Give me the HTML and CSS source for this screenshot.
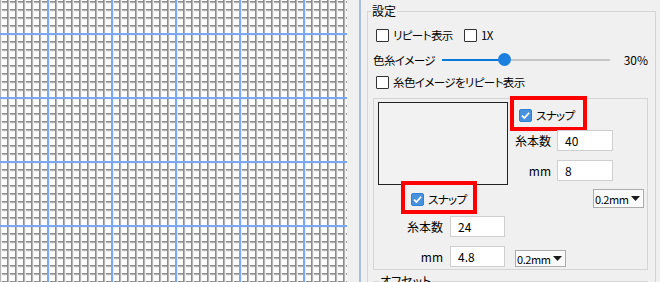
FILE: index.html
```html
<!DOCTYPE html>
<html lang="ja">
  <head>
    <meta charset="UTF-8" />
    <title>設定</title>
    <link rel="stylesheet" href="styles.css">
  </head>
  <body>
    <div class="app">
      <div class="viewer">
        <div class="canvas"></div>
      </div>

      <div class="panel">
        <fieldset class="group">
          <legend>設定</legend>

          <div class="row opts">
            <label class="check repeat"><span class="box"></span>リピート表示</label>
            <label class="check"><span class="box"></span>1X</label>
          </div>

          <div class="row slider-row">
            <span class="slider-label">色糸イメージ</span>
            <div class="slider"><span class="thumb"></span></div>
            <span class="value">30%</span>
          </div>

          <div class="row opts-2">
            <label class="check"><span class="box"></span>糸色イメージをリピート表示</label>
          </div>

          <!-- サイズ指定 -->
          <div class="size-box">
            <div class="preview"></div>

            <label class="check snap snap-x">
              <svg class="box-on" width="13" height="13" viewBox="0 0 13 13"><rect x="0.5" y="0.5" width="12" height="12" rx="1.5" fill="#4792df" stroke="#2f7fd2"/><path d="M3 6.6 L5.4 9.1 L10.1 3.7" fill="none" stroke="#fff" stroke-width="1.7"/></svg>
              スナップ
            </label>
            <div class="field count-x"><span class="field-label">糸本数</span><span class="input">40</span></div>
            <div class="field mm-x"><span class="field-label">mm</span><span class="input">8</span></div>

            <label class="check snap snap-y">
              <svg class="box-on" width="13" height="13" viewBox="0 0 13 13"><rect x="0.5" y="0.5" width="12" height="12" rx="1.5" fill="#4792df" stroke="#2f7fd2"/><path d="M3 6.6 L5.4 9.1 L10.1 3.7" fill="none" stroke="#fff" stroke-width="1.7"/></svg>
              スナップ
            </label>
            <div class="select select-x"><span>0.2mm</span><svg width="9" height="5" viewBox="0 0 9 5"><path d="M0 0h9L4.5 5z" fill="#1a1a1a"/></svg></div>

            <div class="field count-y"><span class="field-label">糸本数</span><span class="input">24</span></div>
            <div class="field mm-y"><span class="field-label">mm</span><span class="input">4.8</span></div>
            <div class="select select-y"><span>0.2mm</span><svg width="9" height="5" viewBox="0 0 9 5"><path d="M0 0h9L4.5 5z" fill="#1a1a1a"/></svg></div>
          </div>

          <fieldset class="group sub">
            <legend>オフセット</legend>
          </fieldset>
        </fieldset>
      </div>
    </div>
  </body>
</html>
```

FILE: styles.css
```css
* {
  margin: 0;
  padding: 0;
  box-sizing: border-box;
}
html,
body {
  width: 660px;
  height: 282px;
  overflow: hidden;
}
body {
  font-family: "Noto Sans CJK JP", "Noto Sans", sans-serif;
  font-size: 12px;
  /* かなを詰める (Meiryo UI っぽく) */
  font-feature-settings: "palt" 1;
  color: #000;
  background-color: #f0f0f0;
}
.app {
  display: flex;
  height: 282px;
}

/* 左: 方眼 */
.viewer {
  width: 359px;
  flex: none;
}
.canvas {
  width: 347px;
  height: 100%;
  background-color: #fff;
  background-image:
    linear-gradient(to right, #7aa7f6 0 2px, transparent 2px),
    linear-gradient(to bottom, #7aa7f6 0 2px, transparent 2px),
    linear-gradient(to right, #8c8c8c 0 1px, #b4b4b4 1px 2px, #f0f0f0 2px 3px, transparent 3px),
    linear-gradient(to bottom, #8c8c8c 0 1px, #b4b4b4 1px 2px, #f0f0f0 2px 3px, transparent 3px);
  background-size: 64px 100%, 100% 64px, 8px 100%, 100% 8px;
  background-position: 47px 0, 0 33px, 7px 0, 0 1px;
}

/* 右: 設定パネル */
.panel {
  flex: 1;
  border-left: 2px solid #a9bedb;
  overflow: hidden;
}
.group {
  margin: 3px 4px 0 6px;
  padding: 0 7px 0 5px;
  border: 1px solid #d5d5d5;
  min-width: 0;
}
.group legend {
  padding: 0 1px;
  margin-left: -2px;
  line-height: 16px;
}
.row {
  display: flex;
  align-items: center;
}
.opts {
  height: 21px;
  margin-top: 6px;
  padding-left: 3px;
}
.opts-2 {
  height: 21px;
  padding-left: 3px;
}
/* かなが多いラベルは少し詰める */
.check,
.slider-label {
  font-size: 11.5px;
  letter-spacing: -0.6px;
}
.check {
  display: inline-flex;
  align-items: center;
  gap: 4px;
  line-height: 13px;
  white-space: nowrap;
}
.repeat {
  width: 88px;
}
.box {
  display: block;
  flex: none;
  width: 13px;
  height: 13px;
  border: 1px solid #333;
  border-radius: 1px;
  background-color: #fff;
}
.box-on {
  display: block;
  flex: none;
}

.slider-row {
  height: 26px;
  padding-top: 1px;
}
.slider-label {
  width: 69px;
}
.slider {
  position: relative;
  width: 168px;
  height: 2px;
  background: linear-gradient(to right, #0a78d8 0 62px, #c6c6c6 62px);
}
.thumb {
  position: absolute;
  left: 56px;
  top: -6px;
  width: 13px;
  height: 13px;
  border-radius: 50%;
  background-color: #1a7fdf;
}
.value {
  margin-left: auto;
}

/* サイズ指定の枠 */
.size-box {
  margin-top: 5px;
  border: 1px solid #d5d5d5;
  display: grid;
  grid-template-columns: 136px 1fr;
  grid-template-rows: 29px 27px 30px 27px 30px 27px;
}
.preview {
  grid-column: 1;
  grid-row: 1 / 4;
  margin: 3px 0 0 4px;
  width: 130px;
  height: 83px;
  border: 1px solid #222;
  background-color: #f2f2f2;
}
.snap {
  align-items: flex-start;
  outline: 4px solid #f00;
  outline-offset: 3px;
}
.snap-x {
  grid-column: 2;
  grid-row: 1;
  margin: 4px 0 0 7px;
  width: 63px;
  height: 21px;
  padding: 6px 0 0 2px;
}
.snap-y {
  grid-column: 1;
  grid-row: 4;
  margin: 3px 0 0 34px;
  width: 62px;
  height: 19px;
  padding: 5px 0 0 3px;
}
.field {
  display: flex;
  align-items: center;
  align-self: start;
}
.field-label {
  text-align: right;
}
.input {
  display: flex;
  align-items: center;
  height: 21px;
  padding-left: 7px;
  background-color: #fff;
  border: 1px solid #cfcfcf;
}
.count-x,
.mm-x {
  grid-column: 2;
}
.count-x {
  grid-row: 2;
  margin-top: 2px;
}
.mm-x {
  grid-row: 3;
  margin-top: 5px;
}
.count-x .field-label,
.mm-x .field-label {
  width: 41px;
  margin-right: 6px;
}
.count-x .input,
.mm-x .input {
  width: 56px;
}
.count-y,
.mm-y {
  grid-column: 1;
}
.count-y {
  grid-row: 5;
  margin-top: 4px;
}
.mm-y {
  grid-row: 6;
  margin-top: 4px;
}
.count-y .field-label,
.mm-y .field-label {
  width: 69px;
  margin-right: 7px;
}
.count-y .input,
.mm-y .input {
  width: 55px;
}

.select {
  display: flex;
  align-items: center;
  justify-content: space-between;
  align-self: start;
  width: 51px;
  padding: 0 3px 0 1px;
  font-size: 11px;
  letter-spacing: -0.4px;
  background-color: #fafafa;
  border: 1px solid #acacac;
}
.select-x {
  grid-column: 2;
  grid-row: 4;
  justify-self: end;
  margin: 4px 3px 0 0;
  height: 19px;
}
.select-y {
  grid-column: 2;
  grid-row: 6;
  justify-self: start;
  margin: 8px 0 0 5px;
  height: 17px;
}

.sub {
  margin: 3px 0 0 0;
  height: 40px;
}
.sub legend {
  margin-left: 0;
}
```
